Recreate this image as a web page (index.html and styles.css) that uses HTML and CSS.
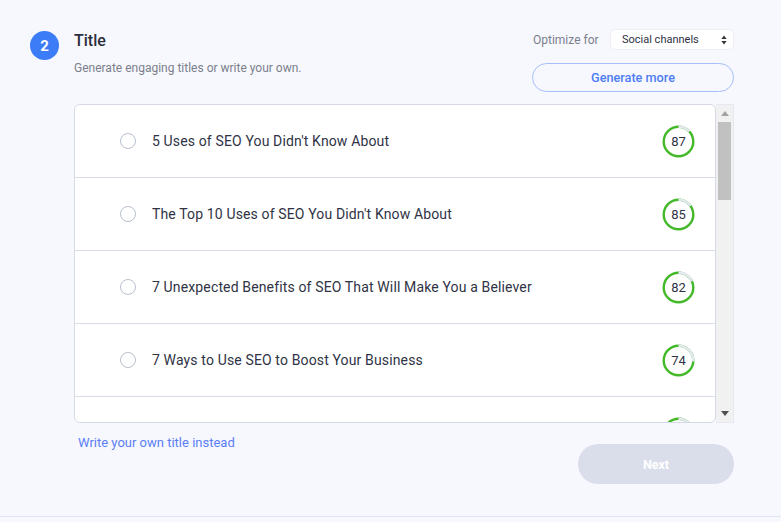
FILE: index.html
```html
<!DOCTYPE html>
<html lang="en">
<head>
<meta charset="utf-8">
<title>Title</title>
<link rel="stylesheet" href="styles.css">
</head>
<body>
<section class="step">
  <div class="badge">2</div>
  <div class="content">
    <div class="header">
      <div class="intro">
        <h2 class="title">Title</h2>
        <p class="subtitle">Generate engaging titles or write your own.</p>
      </div>
      <div class="controls">
        <div class="optimize">
          <span class="opt-label">Optimize for</span>
          <div class="select">
            <span>Social channels</span>
            <svg class="updown" width="6" height="10" viewBox="0 0 6 10"><path d="M3 0.5 L5.6 4 H0.4 Z M3 9.5 L5.6 6 H0.4 Z" fill="#333"/></svg>
          </div>
        </div>
        <button class="gen-btn">Generate more</button>
      </div>
    </div>

    <div class="listbox">
      <div class="card">
        <div class="row">
          <span class="radio"></span>
          <span class="row-text">5 Uses of SEO You Didn't Know About</span>
          <svg class="score" width="33" height="33" viewBox="0 0 33 33"><circle cx="16.5" cy="16.5" r="14.8" fill="none" stroke="#43b92a" stroke-width="2.4"/><circle cx="16.5" cy="16.5" r="14.8" fill="none" stroke="#e5e8f1" stroke-width="2.4" stroke-dasharray="12.09 93" transform="rotate(-90 16.5 16.5)"/><text x="16.5" y="21" text-anchor="middle">87</text></svg>
        </div>
        <div class="row">
          <span class="radio"></span>
          <span class="row-text">The Top 10 Uses of SEO You Didn't Know About</span>
          <svg class="score" width="33" height="33" viewBox="0 0 33 33"><circle cx="16.5" cy="16.5" r="14.8" fill="none" stroke="#43b92a" stroke-width="2.4"/><circle cx="16.5" cy="16.5" r="14.8" fill="none" stroke="#e5e8f1" stroke-width="2.4" stroke-dasharray="13.95 93" transform="rotate(-90 16.5 16.5)"/><text x="16.5" y="21" text-anchor="middle">85</text></svg>
        </div>
        <div class="row">
          <span class="radio"></span>
          <span class="row-text">7 Unexpected Benefits of SEO That Will Make You a Believer</span>
          <svg class="score" width="33" height="33" viewBox="0 0 33 33"><circle cx="16.5" cy="16.5" r="14.8" fill="none" stroke="#43b92a" stroke-width="2.4"/><circle cx="16.5" cy="16.5" r="14.8" fill="none" stroke="#e5e8f1" stroke-width="2.4" stroke-dasharray="16.74 93" transform="rotate(-90 16.5 16.5)"/><text x="16.5" y="21" text-anchor="middle">82</text></svg>
        </div>
        <div class="row">
          <span class="radio"></span>
          <span class="row-text">7 Ways to Use SEO to Boost Your Business</span>
          <svg class="score" width="33" height="33" viewBox="0 0 33 33"><circle cx="16.5" cy="16.5" r="14.8" fill="none" stroke="#43b92a" stroke-width="2.4"/><circle cx="16.5" cy="16.5" r="14.8" fill="none" stroke="#e5e8f1" stroke-width="2.4" stroke-dasharray="24.18 93" transform="rotate(-90 16.5 16.5)"/><text x="16.5" y="21" text-anchor="middle">74</text></svg>
        </div>
        <div class="row">
          <span class="radio"></span>
          <span class="row-text">How SEO Can Help You Grow Your Audience</span>
          <svg class="score" width="33" height="33" viewBox="0 0 33 33"><circle cx="16.5" cy="16.5" r="14.8" fill="none" stroke="#43b92a" stroke-width="2.4"/><circle cx="16.5" cy="16.5" r="14.8" fill="none" stroke="#e5e8f1" stroke-width="2.4" stroke-dasharray="26 93" transform="rotate(-90 16.5 16.5)"/><text x="16.5" y="21" text-anchor="middle">72</text></svg>
        </div>
      </div>
      <div class="scrollbar">
        <svg class="arrow" width="8" height="5" viewBox="0 0 8 5"><path d="M4 0 L8 5 H0 Z" fill="#a3a3a3"/></svg>
        <div class="track"><div class="thumb"></div></div>
        <svg class="arrow" width="8" height="5" viewBox="0 0 8 5"><path d="M4 5 L8 0 H0 Z" fill="#505050"/></svg>
      </div>
    </div>

    <div class="footer">
      <a class="own-link" href="#">Write your own title instead</a>
      <button class="next-btn">Next</button>
    </div>
  </div>
</section>
</body>
</html>
```

FILE: styles.css
```css
* { box-sizing: border-box; }
html, body { margin: 0; padding: 0; }
body {
  background: #f7f8fd;
  font-family: Roboto, "Liberation Sans", Arial, sans-serif;
  color: #2d3142;
  height: 522px;
  overflow: hidden;
}
.step {
  display: flex;
  padding: 29px 47px 32px 30px;
  border-bottom: 1px solid #dfe5f6;
}
.badge {
  width: 29px;
  height: 29px;
  margin-top: 2px;
  border-radius: 50%;
  background: #3c7cf6;
  color: #fff;
  font-size: 15px;
  font-weight: 700;
  display: flex;
  align-items: center;
  justify-content: center;
  flex-shrink: 0;
}
.content {
  flex: 1;
  margin-left: 15px;
  display: flex;
  flex-direction: column;
}
.header {
  display: flex;
  justify-content: space-between;
  align-items: flex-start;
}
.title {
  margin: 2px 0 0;
  font-size: 16px;
  line-height: 20px;
  font-weight: 500;
  color: #2b2e3b;
}
.subtitle {
  margin: 9px 0 0;
  font-size: 12px;
  line-height: 16px;
  color: #7b7f8c;
}
.controls {
  width: 202px;
  display: flex;
  flex-direction: column;
}
.optimize {
  display: flex;
  align-items: center;
  justify-content: space-between;
  padding-left: 1px;
}
.opt-label {
  font-size: 12px;
  color: #7b7f8c;
}
.select {
  width: 124px;
  height: 21px;
  background: #fff;
  border: 1px solid #edeff5;
  border-radius: 5px;
  display: flex;
  align-items: center;
  justify-content: space-between;
  padding: 0 6px 0 11px;
  font-size: 11px;
  color: #2d3142;
}
.updown { display: block; }
.gen-btn {
  margin-top: 13px;
  height: 29px;
  width: 202px;
  border: 1px solid #a6befa;
  border-radius: 15px;
  background: transparent;
  color: #4d7df4;
  font-family: inherit;
  font-size: 12.7px;
  font-weight: 500;
  padding: 0;
}
.listbox {
  margin-top: 12px;
  height: 319px;
  display: flex;
}
.card {
  flex: 1;
  background: #fff;
  border: 1px solid #d6dae6;
  border-radius: 6px;
  overflow: hidden;
}
.row {
  height: 73px;
  border-bottom: 1px solid #d8dce6;
  display: flex;
  align-items: center;
  padding: 0 20px 0 45px;
  flex-shrink: 0;
}
.radio {
  width: 16px;
  height: 16px;
  border: 1px solid #b9bfcf;
  border-radius: 50%;
  flex-shrink: 0;
}
.row-text {
  flex: 1;
  margin-left: 16px;
  font-size: 14px;
  letter-spacing: 0.14px;
  color: #2f3345;
}
.score { display: block; flex-shrink: 0; }
.score text {
  font-family: Roboto, "Liberation Sans", Arial, sans-serif;
  font-size: 13px;
  fill: #2f3345;
}
.scrollbar {
  width: 18px;
  background: #f1f1f1;
  border: 1px solid #e6e8f0;
  border-left: none;
  display: flex;
  flex-direction: column;
  align-items: center;
  padding: 6px 0;
}
.arrow { display: block; flex-shrink: 0; }
.track {
  flex: 1;
  width: 100%;
  padding: 6px 2px 0;
}
.thumb {
  height: 78px;
  background: #c1c1c1;
}
.footer {
  display: flex;
  justify-content: space-between;
  align-items: flex-start;
}
.own-link {
  margin-top: 12px;
  padding-left: 4px;
  font-size: 13px;
  line-height: 16px;
  color: #5a7ef5;
  text-decoration: none;
}
.next-btn {
  margin-top: 21px;
  width: 156px;
  height: 40px;
  border: none;
  border-radius: 20px;
  background: #dadeea;
  color: #fff;
  font-family: inherit;
  font-size: 12.5px;
  font-weight: 700;
  padding: 0;
}
```
